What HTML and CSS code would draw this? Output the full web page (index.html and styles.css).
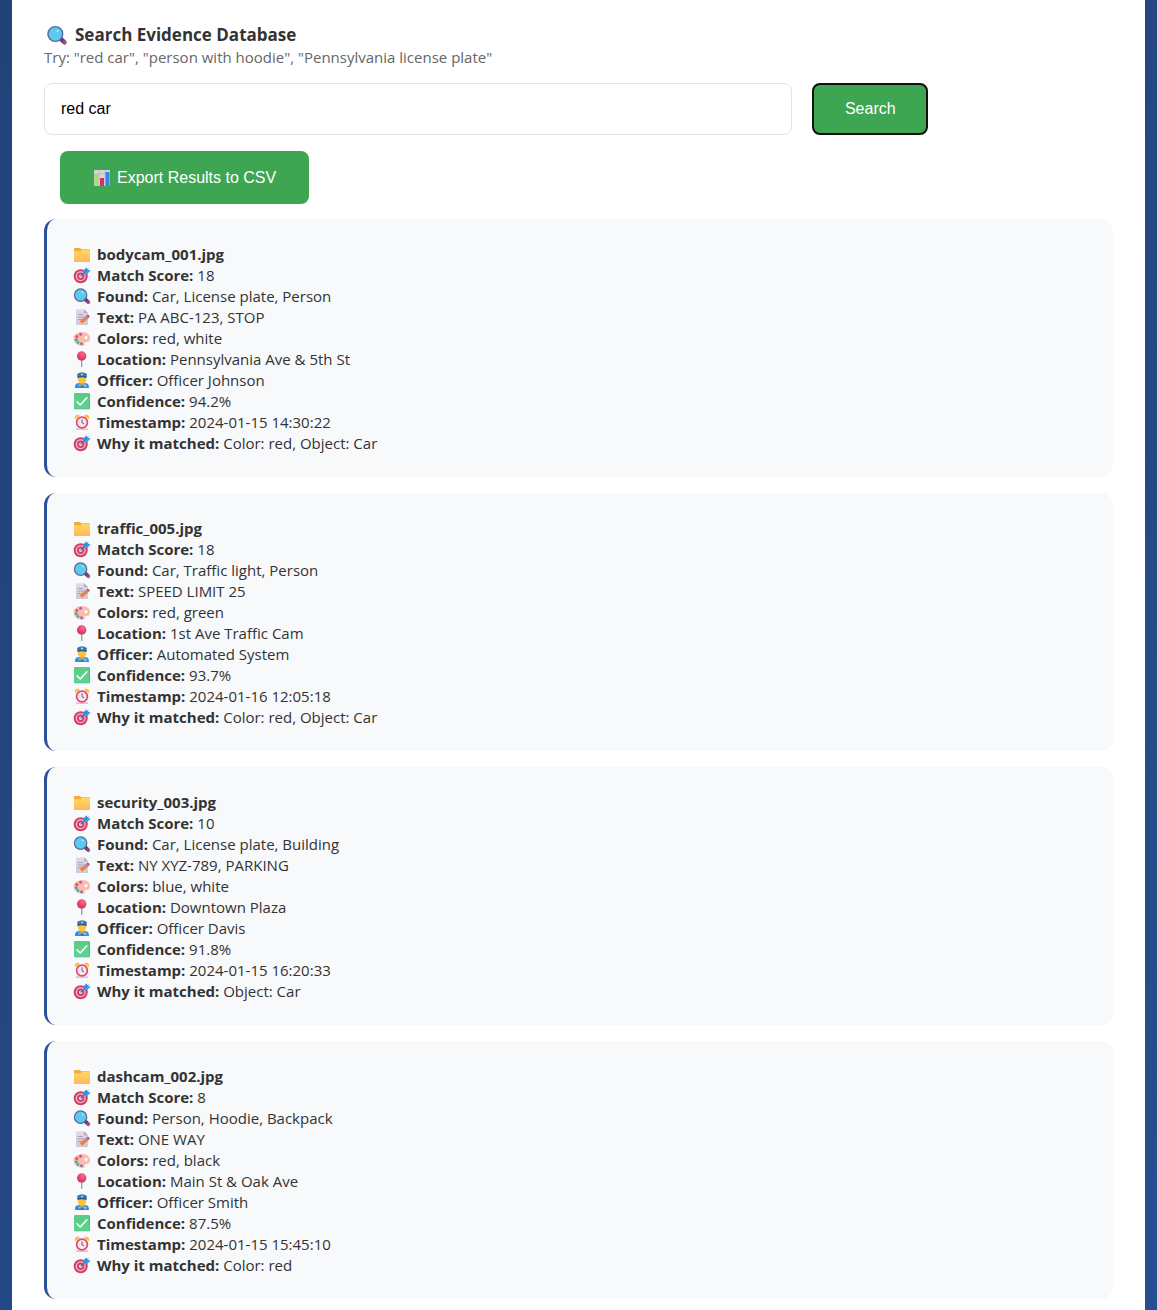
FILE: index.html
```
<!DOCTYPE html>
<html lang="en">
<head>
<meta charset="utf-8">
<meta name="viewport" content="width=device-width, initial-scale=1">
<title>Search Evidence Database</title>
<link rel="stylesheet" href="styles.css">
</head>
<body>
<svg class="sprite" aria-hidden="true">
  <defs>
    <linearGradient id="g-folder" x1="0" y1="0" x2="0" y2="1"><stop offset="0" stop-color="#ffd75e"/><stop offset="1" stop-color="#ffb85c"/></linearGradient>
    <linearGradient id="g-paper" x1="0" y1="0" x2="0" y2="1"><stop offset="0" stop-color="#e0dbe6"/><stop offset="1" stop-color="#cfc6da"/></linearGradient>
    <linearGradient id="g-check" x1="0" y1="0" x2="0" y2="1"><stop offset="0" stop-color="#5bcb85"/><stop offset="1" stop-color="#5fd394"/></linearGradient>
    <radialGradient id="g-pin" cx=".6" cy=".3" r=".8"><stop offset="0" stop-color="#ff6a83"/><stop offset="1" stop-color="#cc2456"/></radialGradient>
    <linearGradient id="g-handle" x1="0" y1="0" x2="1" y2="1"><stop offset="0" stop-color="#54346b"/><stop offset="1" stop-color="#99528f"/></linearGradient>
  </defs>
  <symbol id="folder" viewBox="0 0 18 21">
    <path d="M1 5.700Q1 5 1.800 5H7l1.200 1.200h8Q17 6.200 17 7v11q0 1-1 1H2q-1 0-1-1z" fill="#f5a93f"/>
    <path d="M1 8.200h6.500L8.800 7H17v11q0 1-1 1H2q-1 0-1-1z" fill="url(#g-folder)"/>
  </symbol>
  <symbol id="target" viewBox="0 0 18 21">
    <circle cx="7.700" cy="12.300" r="7" fill="#db3a62"/>
    <circle cx="7.700" cy="12.300" r="5" fill="#e5bfd3"/>
    <circle cx="7.700" cy="12.300" r="3.700" fill="#d93d66"/>
    <circle cx="7.700" cy="12.300" r="1.700" fill="#f0d9e6"/>
    <path d="M7.700 12.300 13 7" stroke="#3f6fae" stroke-width="1.200"/>
    <path d="M10.300 10V6.200L13.600 3.300l.9 2.300 3 .9-3.200 3.500z" fill="#3d9be9"/>
    <path d="m10.500 9.500 5-5" stroke="#2474c4" stroke-width=".8"/>
  </symbol>
  <symbol id="magnifier" viewBox="0 0 18 21">
    <path d="m12.600 14.600 2.700 2.600" stroke="url(#g-handle)" stroke-width="3.800" stroke-linecap="round"/>
    <circle cx="7.600" cy="10.100" r="6.200" fill="#5ec9ec" stroke="#536a9f" stroke-width="1.200"/>
    <circle cx="9.600" cy="7.500" r="1" fill="#a7e7f8"/>
  </symbol>
  <symbol id="note" viewBox="0 0 18 21">
    <path d="M3 4.200q0-.9.900-.9H11l4 4V18q0 1-1 1H4q-1 0-1-1z" fill="url(#g-paper)"/>
    <path d="M11 3.300v3q0 1 1 1h3z" fill="#b3a7c1"/>
    <path d="M4.800 8.500h5M4.800 11h7M4.800 13.500h5" stroke="#a79cb5" stroke-width=".9"/>
    <path d="m5.800 18.500.9-3.200 2.400 2.300z" fill="#f4cba8"/>
    <path d="m6.700 15.300 5.300-4.600 2.300 2.500-5.200 4.500z" fill="#fa7d35"/>
    <path d="m12 10.700 1.500-1.300 2.300 2.500-1.500 1.300z" fill="#938ca0"/>
    <path d="m13.500 9.400.8-.6q1.500-.3 2.300 1.400.1.900-.8 1.700z" fill="#e0445c"/>
  </symbol>
  <symbol id="palette" viewBox="0 0 18 21">
    <path fill-rule="evenodd" d="M8 5C14 4.400 17.300 8 17 11.500c-.2 2.600-1.700 3.500-3.500 3.400-1.700-.1-2.300.6-1.800 1.900.5 1.300-.4 2.200-2.200 2.200C4.500 18.900.5 16 .5 11.600.5 8 4 5.300 8 5zm5 4a1.600 1.600 0 1 0 .01 0z" fill="#f9bda8"/>
    <circle cx="7.600" cy="7.300" r="1.500" fill="#b556d6"/>
    <circle cx="3.800" cy="9.400" r="1.500" fill="#e84a67"/>
    <circle cx="3.300" cy="12.800" r="1.400" fill="#3f8fdf"/>
    <circle cx="5" cy="15.500" r="1.400" fill="#35b8a4"/>
    <circle cx="8.500" cy="16.800" r="1.300" fill="#4f74c9"/>
  </symbol>
  <symbol id="pin" viewBox="0 0 18 21">
    <path d="M8.700 11v7.500" stroke="#998ca3" stroke-width="1.200" stroke-linecap="round"/>
    <circle cx="8.700" cy="8" r="4.700" fill="url(#g-pin)"/>
  </symbol>
  <symbol id="officer" viewBox="0 0 18 21">
    <path d="M2 19v-1.500Q2.200 14 6 14h6q3.600 0 3.900 3.500V19z" fill="#2f8ee0"/>
    <path d="M6.500 13h5v1.800L9 16.800l-2.500-2z" fill="#eda02f"/>
    <path d="M5 14.200 9 17l4-2.800-.8 3.300L9 17.200l-3.200.3z" fill="#65b8f5"/>
    <path d="M8.500 16.800h1V19h-1z" fill="#284b83"/>
    <circle cx="12.700" cy="16.900" r=".8" fill="#ffd45b"/>
    <path d="M4.800 8h8.400v2.500Q13 14 9 14.200 5 14 4.800 10.500z" fill="#ffc23e"/>
    <path d="M4 5Q9 1.700 14 5l-.7 3H4.700z" fill="#2d79c9"/>
    <path d="M4.500 7.300h9l.1 1.600Q9 7.800 4.400 8.900z" fill="#254e85"/>
    <circle cx="9" cy="5.500" r="1" fill="#ffd45b"/>
  </symbol>
  <symbol id="check" viewBox="0 0 18 21">
    <rect x="1" y="3.300" width="16" height="16" rx="1.200" fill="#43ae70"/>
    <rect x="1" y="3.800" width="15.500" height="15" rx="1" fill="url(#g-check)"/>
    <path d="m4 11.800 3.200 3.200 6.700-7.200" fill="none" stroke="#fff" stroke-width="1.500" stroke-linecap="round" stroke-linejoin="round"/>
  </symbol>
  <symbol id="clock" viewBox="0 0 18 21">
    <path d="M3 17.300h12V19H3z" fill="#d4c6e0"/>
    <path d="M2 8.300Q.8 4 5.300 3.600L7 5.100zM16 8.300Q17.200 4 12.700 3.600L11 5.100z" fill="#fbbd45"/>
    <circle cx="9" cy="11.500" r="5.400" fill="#f5eaf4" stroke="#e84668" stroke-width="1.700"/>
    <path d="M9 8.300v3.500l2 1" fill="none" stroke="#66517e" stroke-width="1"/>
  </symbol>
  <symbol id="chart" viewBox="0 0 18 21">
    <rect x="1" y="3" width="16" height="16" rx="1" fill="#d9d2e1"/>
    <path d="M1 7h16M1 12h16M6 3v16M12 3v16" stroke="#bdb3ca" stroke-width=".6"/>
    <path d="M1.500 7h4v12h-4z" fill="#a5df74"/>
    <path d="M7 11h4v8H7z" fill="#d92f65"/>
    <path d="M12.500 5h4v14h-4z" fill="#3688df"/>
  </symbol>
</svg>

<main class="panel">
  <h1 class="title"><svg class="title-icon" aria-hidden="true"><use href="#magnifier"/></svg>Search Evidence Database</h1>
  <p class="hint" id="hint">Try: "red car", "person with hoodie", "Pennsylvania license plate"</p>
  <form class="search">
    <input class="search-box" type="text" value="red car" aria-label="Search evidence" aria-describedby="hint">
    <button class="button search-button" type="button">Search</button>
  </form>
  <button class="button export" type="button"><svg class="icon" aria-hidden="true"><use href="#chart"/></svg>Export Results to CSV</button>

  <section class="results" aria-label="Results">
    <article class="card">
      <p class="row"><svg class="icon"><use href="#folder"/></svg><strong>bodycam_001.jpg</strong></p>
      <p class="row"><svg class="icon"><use href="#target"/></svg><strong>Match Score:</strong> 18</p>
      <p class="row"><svg class="icon"><use href="#magnifier"/></svg><strong>Found:</strong> Car, License plate, Person</p>
      <p class="row"><svg class="icon"><use href="#note"/></svg><strong>Text:</strong> PA ABC-123, STOP</p>
      <p class="row"><svg class="icon"><use href="#palette"/></svg><strong>Colors:</strong> red, white</p>
      <p class="row"><svg class="icon"><use href="#pin"/></svg><strong>Location:</strong> Pennsylvania Ave &amp; 5th St</p>
      <p class="row"><svg class="icon"><use href="#officer"/></svg><strong>Officer:</strong> Officer Johnson</p>
      <p class="row"><svg class="icon"><use href="#check"/></svg><strong>Confidence:</strong> 94.2%</p>
      <p class="row"><svg class="icon"><use href="#clock"/></svg><strong>Timestamp:</strong> 2024-01-15 14:30:22</p>
      <p class="row"><svg class="icon"><use href="#target"/></svg><strong>Why it matched:</strong> Color: red, Object: Car</p>
    </article>
    <article class="card">
      <p class="row"><svg class="icon"><use href="#folder"/></svg><strong>traffic_005.jpg</strong></p>
      <p class="row"><svg class="icon"><use href="#target"/></svg><strong>Match Score:</strong> 18</p>
      <p class="row"><svg class="icon"><use href="#magnifier"/></svg><strong>Found:</strong> Car, Traffic light, Person</p>
      <p class="row"><svg class="icon"><use href="#note"/></svg><strong>Text:</strong> SPEED LIMIT 25</p>
      <p class="row"><svg class="icon"><use href="#palette"/></svg><strong>Colors:</strong> red, green</p>
      <p class="row"><svg class="icon"><use href="#pin"/></svg><strong>Location:</strong> 1st Ave Traffic Cam</p>
      <p class="row"><svg class="icon"><use href="#officer"/></svg><strong>Officer:</strong> Automated System</p>
      <p class="row"><svg class="icon"><use href="#check"/></svg><strong>Confidence:</strong> 93.7%</p>
      <p class="row"><svg class="icon"><use href="#clock"/></svg><strong>Timestamp:</strong> 2024-01-16 12:05:18</p>
      <p class="row"><svg class="icon"><use href="#target"/></svg><strong>Why it matched:</strong> Color: red, Object: Car</p>
    </article>
    <article class="card">
      <p class="row"><svg class="icon"><use href="#folder"/></svg><strong>security_003.jpg</strong></p>
      <p class="row"><svg class="icon"><use href="#target"/></svg><strong>Match Score:</strong> 10</p>
      <p class="row"><svg class="icon"><use href="#magnifier"/></svg><strong>Found:</strong> Car, License plate, Building</p>
      <p class="row"><svg class="icon"><use href="#note"/></svg><strong>Text:</strong> NY XYZ-789, PARKING</p>
      <p class="row"><svg class="icon"><use href="#palette"/></svg><strong>Colors:</strong> blue, white</p>
      <p class="row"><svg class="icon"><use href="#pin"/></svg><strong>Location:</strong> Downtown Plaza</p>
      <p class="row"><svg class="icon"><use href="#officer"/></svg><strong>Officer:</strong> Officer Davis</p>
      <p class="row"><svg class="icon"><use href="#check"/></svg><strong>Confidence:</strong> 91.8%</p>
      <p class="row"><svg class="icon"><use href="#clock"/></svg><strong>Timestamp:</strong> 2024-01-15 16:20:33</p>
      <p class="row"><svg class="icon"><use href="#target"/></svg><strong>Why it matched:</strong> Object: Car</p>
    </article>
    <article class="card">
      <p class="row"><svg class="icon"><use href="#folder"/></svg><strong>dashcam_002.jpg</strong></p>
      <p class="row"><svg class="icon"><use href="#target"/></svg><strong>Match Score:</strong> 8</p>
      <p class="row"><svg class="icon"><use href="#magnifier"/></svg><strong>Found:</strong> Person, Hoodie, Backpack</p>
      <p class="row"><svg class="icon"><use href="#note"/></svg><strong>Text:</strong> ONE WAY</p>
      <p class="row"><svg class="icon"><use href="#palette"/></svg><strong>Colors:</strong> red, black</p>
      <p class="row"><svg class="icon"><use href="#pin"/></svg><strong>Location:</strong> Main St &amp; Oak Ave</p>
      <p class="row"><svg class="icon"><use href="#officer"/></svg><strong>Officer:</strong> Officer Smith</p>
      <p class="row"><svg class="icon"><use href="#check"/></svg><strong>Confidence:</strong> 87.5%</p>
      <p class="row"><svg class="icon"><use href="#clock"/></svg><strong>Timestamp:</strong> 2024-01-15 15:45:10</p>
      <p class="row"><svg class="icon"><use href="#target"/></svg><strong>Why it matched:</strong> Color: red</p>
    </article>
  </section>
</main>
</body>
</html>
```
FILE: styles.css
```
* {
  box-sizing: border-box;
}

body {
  margin: 0;
  padding: 0 12px;
  background: linear-gradient(135deg, #22427a, #274e8e);
  color: #333;
  font: 15px/21px "Segoe UI", "Open Sans", "Noto Sans", sans-serif;
}

.sprite {
  position: absolute;
  width: 0;
  height: 0;
}

.panel {
  min-height: 100vh;
  padding: 22px 32px 11px;
  background: #fff;
}

.title {
  display: flex;
  align-items: center;
  margin: 0;
  font-size: 17px;
  line-height: 25px;
}

.title-icon {
  width: 22px;
  height: 25px;
  margin: 0 7px 0 2px;
}

.hint {
  margin: 0 0 15px;
  color: #666;
}

.search {
  display: flex;
  gap: 20px;
}

.search-box {
  flex: 0 0 70%;
  height: 52px;
  padding: 0 16px;
  border: 1px solid #e1e5e9;
  border-radius: 8px;
  background: #fff;
  color: #000;
  font: 16px "Liberation Sans", Arial, sans-serif;
}

.button {
  border: 0;
  border-radius: 8px;
  background: #3ea653;
  color: #fff;
  font: 16px "Liberation Sans", Arial, sans-serif;
}

.search-button {
  min-width: 116px;
  padding: 0 30px;
  border: 2px solid #101010;
}

.export {
  display: flex;
  align-items: center;
  height: 53px;
  margin: 16px 16px 15px;
  padding: 1px 33px 0;
}

.results {
  display: grid;
  gap: 16px;
}

.card {
  padding: 25px 26px 23px;
  border-left: 3px solid #2a5298;
  border-radius: 12px;
  background: #f8f9fb;
}

.row {
  margin: 0;
}

.icon {
  width: 18px;
  height: 21px;
  margin: -1px 6px 0 0;
  vertical-align: top;
}
```
